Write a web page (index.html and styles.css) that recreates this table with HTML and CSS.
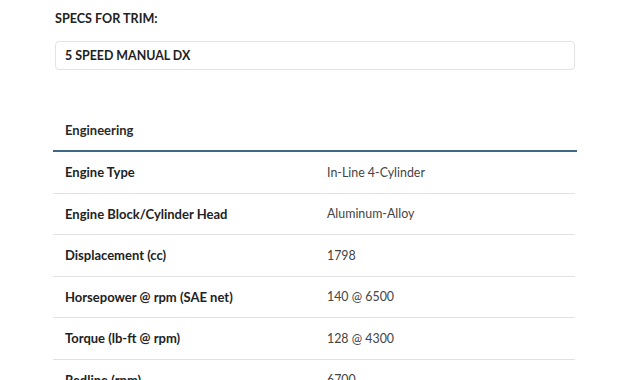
FILE: index.html
```html
<!DOCTYPE html>
<html>
<head>
<meta charset="utf-8">
<link rel="stylesheet" href="styles.css">
</head>
<body>
<div class="page">
  <div class="trim">
    <div class="trim-label">SPECS FOR TRIM:</div>
    <div class="trim-select">5 SPEED MANUAL DX</div>
  </div>
  <div class="section">
    <div class="section-head">Engineering</div>
    <div class="rows">
      <div class="row"><div class="k">Engine Type</div><div class="v">In-Line 4-Cylinder</div></div>
      <div class="row"><div class="k">Engine Block/Cylinder Head</div><div class="v">Aluminum-Alloy</div></div>
      <div class="row"><div class="k">Displacement (cc)</div><div class="v">1798</div></div>
      <div class="row"><div class="k">Horsepower @ rpm (SAE net)</div><div class="v">140 @ 6500</div></div>
      <div class="row"><div class="k">Torque (lb-ft @ rpm)</div><div class="v">128 @ 4300</div></div>
      <div class="row"><div class="k">Redline (rpm)</div><div class="v">6700</div></div>
    </div>
  </div>
</div>
</body>
</html>
```
FILE: styles.css
```css
html, body {
  margin: 0;
  padding: 0;
  background: #fff;
}
body {
  font-family: Lato, "Open Sans", sans-serif;
  color: #222;
  overflow: hidden;
  height: 380px;
}
.page {
  width: 524px;
  margin-left: 53px;
  padding-top: 11px;
}
.trim {
  padding-left: 2px;
  padding-right: 2px;
}
.trim-label {
  font-size: 12.6px;
  font-weight: 700;
  line-height: 16px;
  color: #222;
}
.trim-select {
  margin-top: 14px;
  height: 27px;
  border: 1px solid #e3e3e3;
  border-radius: 4px;
  padding-left: 9px;
  font-size: 12.4px;
  font-weight: 700;
  line-height: 27px;
  color: #1e1e1e;
}
.section {
  margin-top: 40px;
}
.section-head {
  height: 40px;
  line-height: 40px;
  padding-left: 12px;
  font-size: 13px;
  font-weight: 700;
  color: #2a2a2a;
  border-bottom: 2px solid #3e6985;
}
.row {
  display: grid;
  grid-template-columns: 274px 1fr;
  height: 40.5px;
  align-items: center;
  border-bottom: 1px solid #e2e2e2;
  margin-right: 2px;
}
.k {
  padding-left: 12px;
  font-size: 13px;
  font-weight: 700;
  color: #222;
}
.v {
  font-size: 12.4px;
  color: #444;
}
```
